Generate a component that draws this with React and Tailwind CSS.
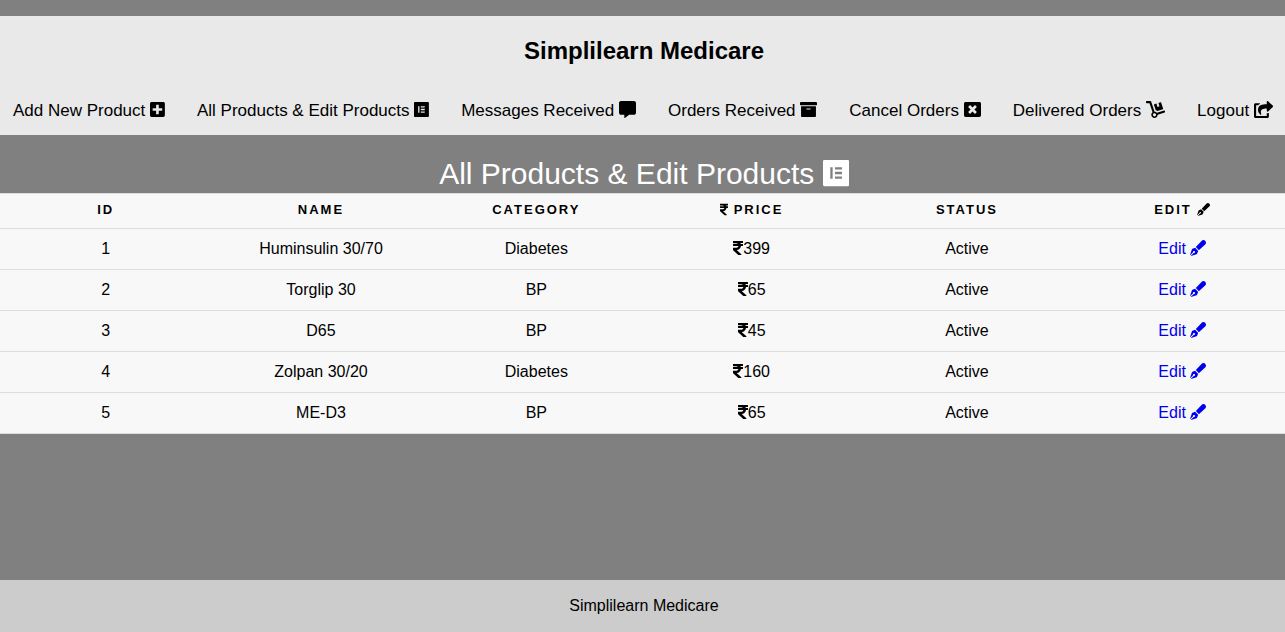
import React from "react";
import {
  FaPlusSquare,
  FaCommentAlt,
  FaArchive,
  FaWindowClose,
  FaDolly,
  FaShareSquare,
  FaRupeeSign,
  FaPenFancy,
} from "react-icons/fa";

function ElementorIcon({ className }) {
  return (
    <svg viewBox="0 0 448 512" fill="currentColor" className={className} aria-hidden="true">
      <path d="M425.6 32H22.4C10 32 0 42 0 54.4v403.2C0 470 10 480 22.4 480h403.2c12.4 0 22.4-10 22.4-22.4V54.4C448 42 438 32 425.6 32M164.3 355.5h-39.8v-199h39.8v199zm159.3 0H204.1v-39.8h119.5v39.8zm0-79.6H204.1v-39.8h119.5v39.8zm0-79.7H204.1v-39.8h119.5v39.8z" />
    </svg>
  );
}

const iconXs = "inline-block h-[1em] w-[0.625em] align-[-0.125em]";
const iconSm = "inline-block h-[1em] w-[0.875em] align-[-0.125em]";
const iconMd = "inline-block h-[1em] w-[1em] align-[-0.125em]";
const iconLg = "inline-block h-[1em] w-[1.125em] align-[-0.125em]";

const links = [
  { label: "Add New Product", Icon: FaPlusSquare, size: iconSm },
  { label: "All Products & Edit Products", Icon: ElementorIcon, size: iconSm },
  { label: "Messages Received", Icon: FaCommentAlt, size: iconMd },
  { label: "Orders Received", Icon: FaArchive, size: iconMd },
  { label: "Cancel Orders", Icon: FaWindowClose, size: iconMd },
  { label: "Delivered Orders", Icon: FaDolly, size: iconLg },
  { label: "Logout", Icon: FaShareSquare, size: iconLg },
];

const products = [
  { id: 1, name: "Huminsulin 30/70", category: "Diabetes", price: 399 },
  { id: 2, name: "Torglip 30", category: "BP", price: 65 },
  { id: 3, name: "D65", category: "BP", price: 45 },
  { id: 4, name: "Zolpan 30/20", category: "Diabetes", price: 160 },
  { id: 5, name: "ME-D3", category: "BP", price: 65 },
];

export default function App() {
  return (
    <div className="flex min-h-screen flex-col overflow-hidden bg-[#808080] pt-4 font-['Liberation_Sans',Arial,sans-serif] text-base text-black">
      <header className="bg-[#e9e9e9] pt-5 pb-3">
        <h1 className="pl-[3px] text-center text-2xl leading-[30px] font-bold">Simplilearn Medicare</h1>
        <nav className="flex justify-between pt-8 pr-3 pl-[13px]">
          {links.map(({ label, Icon, size }) => (
            <a key={label} href="#" className="text-[17px] leading-[25px] whitespace-nowrap">
              {label} <Icon className={size} />
            </a>
          ))}
        </nav>
      </header>

      <main className="pt-5">
        <h2 className="pl-[3px] text-center text-[30px] leading-[38px] text-white">
          All Products &amp; Edit Products <ElementorIcon className={iconSm} />
        </h2>
        <table className="-ml-[2px] w-[calc(100%+7px)] table-fixed border-collapse bg-[#f8f8f8] text-center">
          <thead>
            <tr className="h-[35px] border-y border-[#dddddd] text-[13px] leading-4 tracking-[2px] uppercase *:pb-[2px]">
              <th>ID</th>
              <th>Name</th>
              <th>Category</th>
              <th>
                <FaRupeeSign className={iconXs} /> Price
              </th>
              <th>Status</th>
              <th>
                Edit <FaPenFancy className={iconMd} />
              </th>
            </tr>
          </thead>
          <tbody>
            {products.map((p) => (
              <tr key={p.id} className="h-[41px] border-b border-[#dddddd] leading-5">
                <td>{p.id}</td>
                <td>{p.name}</td>
                <td>{p.category}</td>
                <td>
                  <FaRupeeSign className={iconXs} />
                  {p.price}
                </td>
                <td>Active</td>
                <td>
                  <a href="#" className="text-[#0000ee]">
                    Edit <FaPenFancy className={iconMd} />
                  </a>
                </td>
              </tr>
            ))}
          </tbody>
        </table>
      </main>

      <footer className="mt-auto bg-[#cccccc] py-4 pl-[3px] text-center leading-5">Simplilearn Medicare</footer>
    </div>
  );
}
